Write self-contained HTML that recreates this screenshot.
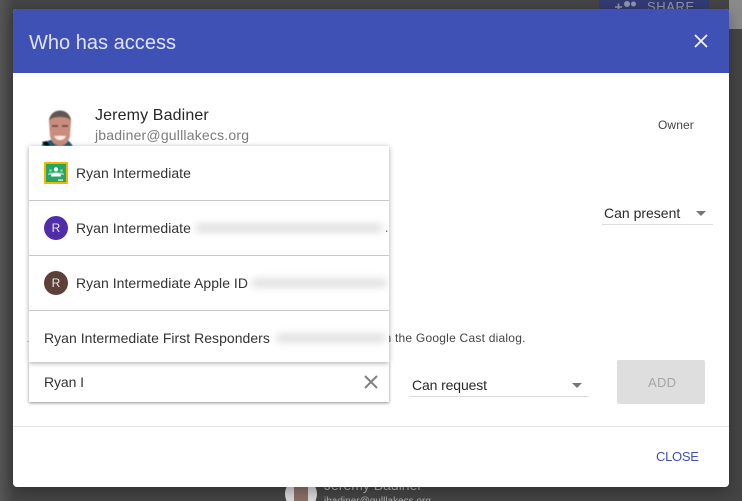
<!DOCTYPE html>
<html><head><meta charset="utf-8">
<style>
html,body{margin:0;padding:0;width:742px;height:501px;overflow:hidden;background:#444}
body{position:relative;font-family:"Liberation Sans",sans-serif;color:#2a2a2a}
.a{position:absolute}
.t{position:absolute;white-space:nowrap;line-height:16px}
.blur{position:absolute;height:8px;background:#dcdcdc;filter:blur(4px)}
.hr{position:absolute;height:1px;background:#c9c9c9}
.tri{position:absolute;width:0;height:0;border-left:5px solid transparent;border-right:5px solid transparent;border-top:5px solid #757575}
.av{position:absolute;width:24px;height:24px;border-radius:50%;color:#e8e8e8;font-size:12px;line-height:24px;text-align:center}
</style></head>
<body>
<div class="a" style="left:0;top:0;width:14px;height:501px;background:linear-gradient(90deg,#555,#444)"></div>
<div class="a" style="left:599px;top:0;width:110px;height:10px;background:#323c72"></div>
<svg class="a" style="left:614px;top:0" width="24" height="10" viewBox="0 0 24 10"><path d="M1 7H8M4.500 3.500V10" stroke="#8f95ad" stroke-width="1.600" fill="none"/><circle cx="13" cy="4" r="3" fill="#8f95ad"/><circle cx="19.500" cy="4" r="2.500" fill="#8f95ad"/></svg>
<div class="t" style="left:647px;top:-1px;font-size:13px;color:#8f95ad;letter-spacing:.6px">SHARE</div>
<div class="a" style="left:729px;top:0;width:13px;height:29px;background:#8a8a8a"></div>
<div class="a" style="left:285px;top:478px;width:32px;height:32px;border-radius:50%;background:#d8d8d8"></div>
<div class="a" style="left:294px;top:482px;width:14px;height:20px;background:#8c6f68"></div>
<div class="t" style="left:324px;top:477px;font-size:14px;color:#b0b0b0">Jeremy Badiner</div>
<div class="t" style="left:324px;top:494px;font-size:10px;color:#b0b0b0">jbadiner@gulllakecs.org</div>

<div class="a" style="left:13px;top:9px;width:716px;height:478px;background:#fff;border-radius:3px 3px 4px 4px;box-shadow:0 4px 14px rgba(0,0,0,.3);overflow:hidden">
  <div class="a" style="left:0;top:0;width:716px;height:64px;background:#3f51b5"></div>
</div>
<div class="t" style="left:29px;top:33px;font-size:20px;line-height:20px;color:#dfe3f5;letter-spacing:.02px">Who has access</div>
<svg class="a" style="left:693px;top:33px" width="16" height="16" viewBox="0 0 16 16"><path d="M2 2L14 14M14 2L2 14" stroke="#f2f3fb" stroke-width="1.800" fill="none"/></svg>

<svg class="a" style="left:41px;top:109px" width="34" height="38" viewBox="0 0 34 38">
<defs><filter id="b"><feGaussianBlur stdDeviation=".5"/></filter></defs>
<g filter="url(#b)">
<path d="M1 35L9 31L27 31L32 37L1 37Z" fill="#1c5a80"/>
<path d="M1 33L6 32L9 37L4 37Z" fill="#111"/>
<ellipse cx="19" cy="12" rx="11" ry="10.500" fill="#5f574f"/>
<path d="M8 12Q10 8 19 8Q28 8 30 12L29 27Q27 36 19 37Q11 36 9 27Z" fill="#c88d7c"/>
<rect x="11" y="16" width="6" height="2" fill="#6f4e43"/>
<rect x="21" y="16" width="6" height="2" fill="#6f4e43"/>
<path d="M13 27Q19 26.500 25 27Q23 31 19 31Q15 31 13 27Z" fill="#f6ece6"/>
</g>
</svg>
<div class="t" style="left:95px;top:108px;font-size:16px;color:#262626;letter-spacing:.13px">Jeremy Badiner</div>
<div class="t" style="left:95px;top:127px;font-size:14px;color:#7b7b7b;letter-spacing:.2px">jbadiner@gulllakecs.org</div>
<div class="t" style="left:658px;top:117px;font-size:12px;color:#444;letter-spacing:.1px">Owner</div>

<div class="t" style="left:604px;top:205px;font-size:14px;color:#2a2a2a">Can present</div>
<div class="tri" style="left:696px;top:211px"></div>
<div class="a" style="left:602px;top:224px;width:111px;height:1px;background:#ddd"></div>

<div class="a" style="left:27px;top:341px;width:3px;height:1px;background:#ccc"></div>
<div class="t" style="left:384.500px;top:330px;font-size:12px;color:#444;letter-spacing:.23px">n the Google Cast dialog.</div>

<div class="t" style="left:412px;top:377px;font-size:14px;color:#2a2a2a;letter-spacing:-.12px">Can request</div>
<div class="tri" style="left:572px;top:383px"></div>
<div class="a" style="left:409px;top:396px;width:180px;height:1px;background:#ddd"></div>
<div class="a" style="left:617px;top:360px;width:88px;height:44px;background:#dedede;border-radius:2px"></div>
<div class="t" style="left:648px;top:375px;font-size:13px;color:#a6a6a6;letter-spacing:.3px">ADD</div>

<div class="a" style="left:13px;top:426px;width:716px;height:1px;background:#e3e3e3"></div>
<div class="t" style="left:656px;top:449px;font-size:13px;color:#3f51b5;letter-spacing:-.3px">CLOSE</div>

<!-- search input -->
<div class="a" style="left:29px;top:362px;width:360px;height:40px;background:#fff;box-shadow:0 1px 3px rgba(0,0,0,.45)"></div>
<div class="t" style="left:44px;top:374px;font-size:14px;color:#333;letter-spacing:-.1px">Ryan I</div>
<svg class="a" style="left:364px;top:375px" width="14" height="14" viewBox="0 0 14 14"><path d="M1 1L13 13M13 1L1 13" stroke="#808080" stroke-width="2" fill="none"/></svg>

<!-- dropdown -->
<div class="a" style="left:29px;top:146px;width:360px;height:216px;background:#fff;box-shadow:0 1px 5px rgba(0,0,0,.35)"></div>
<div class="a" style="left:44px;top:162px;width:24px;height:22px;box-sizing:border-box;background:#25a667;border:2px solid #f5b400;border-radius:1px"></div>
<svg class="a" style="left:46px;top:164px" width="20" height="18" viewBox="0 0 20 18">
<circle cx="4.500" cy="6.500" r="1.300" fill="#8fd6b0"/><circle cx="15.500" cy="6.500" r="1.300" fill="#8fd6b0"/>
<path d="M2 11Q2 8.500 5 8.500L15 8.500Q18 8.500 18 11Z" fill="#8fd6b0"/>
<circle cx="10" cy="5.500" r="2.200" fill="#fff"/><path d="M5 12.500Q5 9 10 9Q15 9 15 12.500Z" fill="#fff"/>
<rect x="12" y="15.500" width="5" height="1.200" fill="#fff"/>
</svg>
<div class="t" style="left:76px;top:165px;font-size:14px;color:#333;letter-spacing:.03px">Ryan Intermediate</div>
<div class="hr" style="left:29px;top:200px;width:360px"></div>

<div class="av" style="left:44px;top:216px;background:#512da8">R</div>
<div class="t" style="left:76px;top:220px;font-size:14px;color:#333;letter-spacing:.03px">Ryan Intermediate</div>
<div class="blur" style="left:196px;top:224px;width:186px"></div>
<div class="t" style="left:385px;top:220px;font-size:12px;color:#555">.</div>
<div class="hr" style="left:29px;top:255px;width:360px"></div>

<div class="av" style="left:44px;top:271px;background:#5d4037">R</div>
<div class="t" style="left:76px;top:275px;font-size:14px;color:#333;letter-spacing:.03px">Ryan Intermediate Apple ID</div>
<div class="blur" style="left:252px;top:279px;width:134px"></div>
<div class="hr" style="left:29px;top:310px;width:360px"></div>

<div class="t" style="left:44px;top:330px;font-size:14px;color:#333;letter-spacing:.03px">Ryan Intermediate First Responders</div>
<div class="blur" style="left:277px;top:334px;width:108px"></div>
</body></html>
